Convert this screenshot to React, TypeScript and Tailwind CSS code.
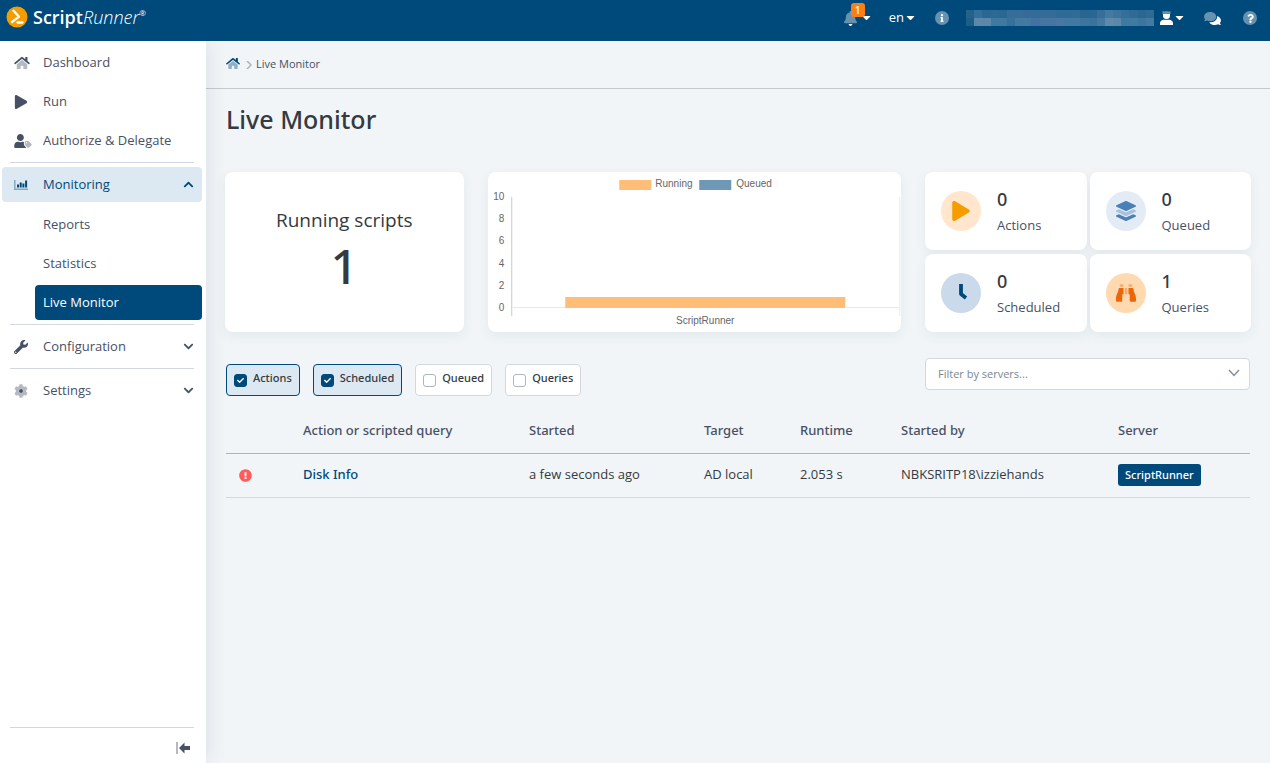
import { useState } from "react";
import type { ReactNode } from "react";
import {
  FaCaretDown,
  FaCheck,
  FaChevronDown,
  FaChevronUp,
  FaCog,
  FaExclamationCircle,
  FaInfo,
  FaPlay,
  FaQuestion,
  FaWrench,
} from "react-icons/fa";

const HomeIcon = ({ className }: { className: string }) => (
  <svg viewBox="0 0 576 512" fill="currentColor" className={className}>
    <path
      opacity=".4"
      d="M280.37 148.26L96 300.11V464a16 16 0 0 0 16 16l112.06-.29a16 16 0 0 0 15.92-16V368a16 16 0 0 1 16-16h64a16 16 0 0 1 16 16v95.64a16 16 0 0 0 16 16.05L464 480a16 16 0 0 0 16-16V300L295.67 148.26a12.19 12.19 0 0 0-15.3 0z"
    />
    <path d="M571.6 251.47L488 182.56V44.05a12 12 0 0 0-12-12h-56a12 12 0 0 0-12 12v72.61L318.47 43a48 48 0 0 0-61 0L4.34 251.47a12 12 0 0 0-1.6 16.9l25.5 31A12 12 0 0 0 45.15 301l235.22-193.74a12.19 12.19 0 0 1 15.3 0L530.9 301a12 12 0 0 0 16.9-1.6l25.5-31a12 12 0 0 0-1.7-16.93z" />
  </svg>
);

const UserTagIcon = () => (
  <svg viewBox="0 0 640 512" fill="currentColor" className="h-[14px] w-[18px]">
    <path
      opacity=".4"
      d="M630.6 364.9l-90.3-90.2c-12-12-28.3-18.7-45.3-18.7h-79.3c-17.7 0-32 14.3-32 32v79.2c0 17 6.7 33.2 18.7 45.2l90.3 90.2c12.5 12.5 32.8 12.5 45.3 0l92.5-92.5c12.6-12.5 12.6-32.7.1-45.2zm-182.8-21c-13.3 0-24-10.7-24-24s10.7-24 24-24 24 10.7 24 24c0 13.2-10.7 24-24 24z"
    />
    <path d="M224 255.9c70.7 0 128-57.3 128-128C352 57.3 294.7 0 224 0S96 57.3 96 128c0 70.6 57.3 127.9 128 127.9zm127.8 111.2V294c-12.2-3.6-24.9-6.2-38.2-6.2h-16.7c-22.2 10.2-46.9 16-72.9 16s-50.6-5.8-72.9-16h-16.7C60.2 287.9 0 348.1 0 422.3v41.6c0 26.5 21.5 48 48 48h352c15.5 0 29.1-7.5 37.9-18.9l-58-58c-18.1-18.1-28.1-42.2-28.1-67.9z" />
  </svg>
);

const ChartIcon = () => (
  <svg viewBox="0 0 14 12" fill="currentColor" className="h-3 w-[14px]">
    <path opacity=".4" d="M0 1h1.500v8.500H14V11H0z" />
    <path d="M3 5.500h2v3H3zM5.700 3.500h2v5h-2zM8.400 4.500h2v4h-2zM11.100 1.500h2v7h-2z" />
  </svg>
);

const CogIcon = () => (
  <svg viewBox="0 0 14 14" fill="currentColor" className="size-[14px]">
    <FaCog size={14} opacity=".4" />
    <circle cx="7" cy="7" r="2" />
  </svg>
);

const BellIcon = () => (
  <svg viewBox="0 0 448 512" fill="currentColor" className="h-[15px] w-[13px]">
    <path d="M224 512c35.32 0 63.97-28.65 63.97-64H160.03c0 35.35 28.65 64 63.97 64z" />
    <path
      opacity=".4"
      d="M439.39 362.29c-19.32-20.76-55.47-51.99-55.47-154.29 0-77.7-54.48-139.9-127.94-155.16V32c0-17.67-14.32-32-31.98-32s-31.98 14.33-31.98 32v20.84C118.56 68.1 64.08 130.3 64.08 208c0 102.3-36.15 133.53-55.47 154.29-6 6.45-8.66 14.16-8.61 21.71.11 16.4 12.98 32 32.1 32h383.8c19.12 0 32-15.6 32.1-32 .05-7.55-2.61-15.27-8.61-21.71z"
    />
  </svg>
);

const CommentsIcon = () => (
  <svg viewBox="0 0 576 512" fill="currentColor" className="h-[15px] w-[17px]">
    <path
      opacity=".4"
      d="M416 192c0-88.4-93.1-160-208-160S0 103.6 0 192c0 34.3 14.1 65.9 38 92-13.4 30.2-35.5 54.2-35.8 54.5-2.2 2.3-2.8 5.7-1.5 8.7S4.8 352 8 352c36.6 0 66.9-12.3 88.7-25 32.2 15.7 70.3 25 111.3 25 114.9 0 208-71.6 208-160z"
    />
    <path d="M538 412c23.9-26 38-57.7 38-92 0-66.9-53.5-124.2-129.3-148.1.9 6.6 1.3 13.3 1.3 20.1 0 105.9-107.7 192-240 192-10.8 0-21.3-.8-31.7-1.9C207.8 439.6 281.8 480 368 480c41 0 79.1-9.2 111.3-25 21.8 12.7 52.1 25 88.7 25 3.2 0 6.1-1.9 7.3-4.8 1.3-2.9.7-6.3-1.5-8.7-.3-.3-22.4-24.2-35.8-54.5z" />
  </svg>
);

const AccountIcon = () => (
  <svg viewBox="0 0 13 14" fill="currentColor" className="h-[14px] w-[13px]">
    <path opacity=".4" d="M2.500 0l1.700.6L6.500 0l2.300.6L10.500 0v3h-8z" />
    <path d="M3 3h7v1.500a3.500 3.500 0 0 1-7 0zM0 12.500C0 10.500 1.300 9 3.300 8.800h6.400c2 .2 3.300 1.700 3.300 3.700V14H0z" />
  </svg>
);

const LayersIcon = () => (
  <svg viewBox="0 0 512 512" fill="currentColor" className="size-5">
    <path d="M12.41 148.02l232.94 105.67c6.8 3.09 14.49 3.09 21.29 0l232.94-105.67c16.55-7.51 16.55-32.52 0-40.03L266.65 2.31a25.607 25.607 0 0 0-21.29 0L12.41 107.98c-16.55 7.51-16.55 32.53 0 40.04z" />
    <path
      opacity=".4"
      d="M499.59 236.31l-58.09-26.33-161.64 73.27c-7.56 3.43-15.59 5.17-23.86 5.17s-16.29-1.74-23.86-5.17L70.51 209.98l-58.1 26.33c-16.55 7.5-16.55 32.5 0 40l232.94 105.59c6.8 3.08 14.49 3.08 21.29 0L499.59 276.3c16.55-7.5 16.55-32.5 0-40z"
    />
    <path d="M499.59 364.28l-57.87-26.21-161.86 73.37c-7.56 3.43-15.59 5.17-23.86 5.17s-16.29-1.74-23.86-5.17L70.29 338.07 12.41 364.28c-16.55 7.5-16.55 32.5 0 40l232.94 105.59c6.8 3.08 14.49 3.08 21.29 0L499.59 404.28c16.55-7.5 16.55-32.5 0-40z" />
  </svg>
);

const BinocularsIcon = () => (
  <svg viewBox="0 0 512 512" fill="currentColor" className="size-5">
    <path
      opacity=".4"
      d="M416 48c0-8.84-7.16-16-16-16h-64c-8.84 0-16 7.16-16 16v48h96V48zM176 32h-64c-8.84 0-16 7.16-16 16v48h96V48c0-8.84-7.16-16-16-16zm48 256h64V128h-64v160z"
    />
    <path d="M63.91 159.99C61.4 253.84 3.46 274.22 0 404v44c0 17.67 14.33 32 32 32h96c17.67 0 32-14.33 32-32V288h32V128H95.84c-17.63 0-31.45 14.37-31.93 31.99zm384.18 0c-.48-17.62-14.3-31.99-31.93-31.99H320v160h32v160c0 17.67 14.33 32 32 32h96c17.67 0 32-14.33 32-32v-44c-3.46-129.78-61.4-150.16-63.91-244.01z" />
  </svg>
);

const ClockHandsIcon = () => (
  <svg viewBox="0 0 20 20" fill="none" stroke="currentColor" className="size-5">
    <path d="M10 1v10l5 4" strokeWidth="3.800" strokeLinejoin="round" />
  </svg>
);

const LogoIcon = () => (
  <svg viewBox="0 0 22 22" className="size-[22px]">
    <circle cx="11" cy="11" r="10.5" fill="#f59c00" />
    <path
      d="M7.500 4.800l5.500 5.900L6 16M11.500 16.500h5"
      fill="none"
      stroke="#fff"
      strokeWidth="2.300"
      strokeLinecap="round"
      strokeLinejoin="round"
    />
  </svg>
);

const maskTop = ["#24628c", "#32709a", "#2a6893", "#2c6a95", "#2a6893", "#376d99", "#376d99", "#376a98", "#336d97", "#336d97", "#336d97", "#2e6b95", "#2e6b95", "#316c96", "#28658f", "#2a6691", "#376f98", "#447aa0", "#3d749c", "#32709a", "#2f6b95", "#2b6791", "#2e6b94"];
const maskBottom = ["#1d5d89", "#5e88a9", "#5c87a8", "#4079a0", "#4079a0", "#36719b", "#447aa1", "#447aa1", "#4172a0", "#4874a2", "#4874a2", "#4b78a3", "#4379a1", "#4379a1", "#3c759e", "#39739b", "#447aa1", "#6089aa", "#5c87a8", "#4079a0", "#407aa0", "#3c759e", "#447aa1"];

const Header = () => (
  <header className="relative z-20 flex h-[41px] items-center justify-between bg-[#00497b] pr-[13px] pl-[6px] text-white">
    <a href="#" className="flex h-[34px] items-center gap-[5px] self-start">
      <LogoIcon />
      <span className="flex text-[18px] leading-[22px]">
        <span className="font-semibold">Script</span>
        <span className="font-light italic">Runner</span>
        <sup className="top-0 text-[8px] leading-[14px]">®</sup>
      </span>
    </a>

    <div className="flex h-9 items-center self-start text-[13px]">
      <button className="relative mr-4 flex items-center gap-[3px]">
        <BellIcon />
        <FaCaretDown size={13} className="mb-[2px]" />
        <span className="absolute -top-2 left-[7px] size-[14px] rounded-[3px] bg-[#fd7e14] text-center text-[10px] leading-[14px] font-semibold">
          1
        </span>
      </button>
      <button className="mr-[18px] flex items-center">
        en
        <FaCaretDown size={13} className="mb-[2px]" />
      </button>
      <button
        aria-label="Info"
        className="mr-[17px] grid size-[14px] place-items-center rounded-full bg-white/40"
      >
        <FaInfo size={8} />
      </button>
      <div className="mr-[6px] w-[188px]">
        <div className="flex h-2">
          {maskTop.map((color, i) => (
            <span key={i} className="flex-1" style={{ backgroundColor: color }} />
          ))}
        </div>
        <div className="flex h-2">
          {maskBottom.map((color, i) => (
            <span key={i} className="flex-1" style={{ backgroundColor: color }} />
          ))}
        </div>
      </div>
      <button aria-label="Account" className="mr-[18px] flex items-center">
        <AccountIcon />
        <FaCaretDown size={13} className="mb-[2px]" />
      </button>
      <button aria-label="Messages" className="mr-[22px]">
        <CommentsIcon />
      </button>
      <button
        aria-label="Help"
        className="grid size-[14px] place-items-center rounded-full bg-white/40"
      >
        <FaQuestion size={9} />
      </button>
    </div>
  </header>
);

const NavItem = ({
  icon,
  label,
  chevron,
  open,
}: {
  icon: ReactNode;
  label: string;
  chevron?: ReactNode;
  open?: boolean;
}) => (
  <a
    href="#"
    className={`flex h-[35px] items-center rounded pr-2 pl-3 ${
      open ? "bg-[#dce8f2] text-[#00497b]" : "text-[#475166]"
    }`}
  >
    <span className="w-[29px]">{icon}</span>
    <span className="flex-1">{label}</span>
    {chevron}
  </a>
);

const Divider = () => <hr className="mr-2 ml-2 border-[#d3d8e0]" />;

const Sidebar = () => (
  <aside className="z-10 flex w-[206px] shrink-0 flex-col justify-between bg-white text-[13px] shadow-[0_0_20px_rgba(40,60,80,0.12)]">
    <nav className="flex flex-col gap-1 pt-1 pr-1 pl-[2px]">
      <NavItem icon={<HomeIcon className="h-[14px] w-4" />} label="Dashboard" />
      <NavItem icon={<FaPlay size={14} />} label="Run" />
      <NavItem icon={<UserTagIcon />} label="Authorize & Delegate" />
      <Divider />
      <NavItem
        icon={<ChartIcon />}
        label="Monitoring"
        chevron={<FaChevronUp size={11} />}
        open
      />
      <div className="flex flex-col gap-1 pt-px pl-[33px] text-[#475166]">
        <a href="#" className="flex h-[35px] items-center rounded px-2">
          Reports
        </a>
        <a href="#" className="flex h-[35px] items-center rounded px-2">
          Statistics
        </a>
        <a
          href="#"
          className="flex h-[35px] items-center rounded bg-[#00497b] px-2 text-white"
        >
          Live Monitor
        </a>
      </div>
      <Divider />
      <NavItem
        icon={<FaWrench size={14} />}
        label="Configuration"
        chevron={<FaChevronDown size={11} />}
      />
      <Divider />
      <NavItem
        icon={<CogIcon />}
        label="Settings"
        chevron={<FaChevronDown size={11} />}
      />
    </nav>

    <div className="pr-1 pl-[2px]">
      <Divider />
      <div className="flex h-[35px] items-center justify-end pt-1 pr-3">
        <button aria-label="Collapse menu" className="text-[#475166]">
          <svg viewBox="0 0 14 12" fill="currentColor" className="h-3 w-[14px]">
            <path opacity=".4" d="M0 0h2v12H0z" />
            <path d="M3 6l5.500-5.500V4H14v4H8.500v3.500z" />
          </svg>
        </button>
      </div>
    </div>
  </aside>
);

const Card = ({ className, children }: { className: string; children: ReactNode }) => (
  <div className={`rounded-lg bg-white shadow-[0_4px_12px_rgba(40,70,90,0.07)] ${className}`}>
    {children}
  </div>
);

const QueueChart = () => (
  <svg
    viewBox="0 0 413 160"
    className="h-40 w-full font-['Liberation_Sans',Arial,sans-serif] text-[10px]"
  >
    <rect x="131" y="8" width="32" height="10" fill="#ffbd78" />
    <rect x="211" y="8" width="32" height="10" fill="#6f98b7" />
    <g fill="#666">
      <text x="167" y="15">Running</text>
      <text x="248" y="15">Queued</text>
      {[10, 8, 6, 4, 2, 0].map((tick, i) => (
        <text key={tick} x="16" y={28 + i * 22.2} textAnchor="end">
          {tick}
        </text>
      ))}
      <text x="217" y="152" textAnchor="middle">ScriptRunner</text>
    </g>
    <path d="M23.500 25v119" stroke="#c9c9c9" />
    <path d="M411.500 25v119M24 135.500h387" stroke="#e8e8e8" />
    <rect x="77" y="125" width="280" height="11" fill="#ffbd78" />
  </svg>
);

const stats = [
  { label: "Actions", value: 0, color: "bg-[#ffe6cc] text-[#f59c00]", icon: <FaPlay size={20} /> },
  { label: "Queued", value: 0, color: "bg-[#e3ecf5] text-[#4a7fb8]", icon: <LayersIcon /> },
  { label: "Scheduled", value: 0, color: "bg-[#cadaea] text-[#00497b]", icon: <ClockHandsIcon /> },
  { label: "Queries", value: 1, color: "bg-[#ffdab0] text-[#ec6608]", icon: <BinocularsIcon /> },
];

const FilterToggle = ({ label, initial }: { label: string; initial: boolean }) => {
  const [checked, setChecked] = useState(initial);

  return (
    <label
      className={`flex h-8 cursor-pointer items-center gap-[6px] rounded border px-[7px] font-['Noto_Sans',sans-serif] text-[11px] font-medium text-[#343a40] ${
        checked ? "border-[#00497b] bg-[#dce8f2]" : "border-[#d3d8e0] bg-white"
      }`}
    >
      <span className="relative size-[13px]">
        <input
          type="checkbox"
          checked={checked}
          onChange={(e) => setChecked(e.target.checked)}
          className="block size-[13px] appearance-none rounded-[3px] border border-[#adb5bd] bg-white checked:border-[#00497b] checked:bg-[#00497b]"
        />
        {checked && (
          <FaCheck
            size={7}
            className="pointer-events-none absolute top-[3px] left-[3px] text-white"
          />
        )}
      </span>
      <span className="pb-1">{label}</span>
    </label>
  );
};

const columns = [
  { label: "", width: "w-[77px]" },
  { label: "Action or scripted query", width: "w-[226px]" },
  { label: "Started", width: "w-[175px]" },
  { label: "Target", width: "w-[96px]" },
  { label: "Runtime", width: "w-[101px]" },
  { label: "Started by", width: "w-[217px]" },
  { label: "Server", width: "w-[132px]" },
];

const RunsTable = () => (
  <table className="mt-3 w-full table-fixed text-left text-[13px] text-[#343a40]">
    <thead>
      <tr className="h-[45px] border-b border-[#adb5c4] font-['Noto_Sans',sans-serif] text-[#475166]">
        {columns.map((col) => (
          <th key={col.label} className={`font-medium ${col.width}`}>
            {col.label}
          </th>
        ))}
      </tr>
    </thead>
    <tbody>
      <tr className="h-11 border-b border-[#d3d8e0]">
        <td className="pl-[13px]">
          <FaExclamationCircle size={13} className="text-[#ff5c5c]" />
        </td>
        <td>
          <a href="#" className="font-['Noto_Sans',sans-serif] font-medium text-[#00497b]">
            Disk Info
          </a>
        </td>
        <td>a few seconds ago</td>
        <td>AD local</td>
        <td>2.053 s</td>
        <td>NBKSRITP18\izziehands</td>
        <td>
          <span className="inline-block rounded-[3px] bg-[#00497b] px-[7px] font-['Noto_Sans',sans-serif] text-[11px] leading-[22px] font-medium text-white">
            ScriptRunner
          </span>
        </td>
      </tr>
    </tbody>
  </table>
);

const App = () => {
  return (
    <div className="flex min-h-screen flex-col bg-[#f1f5f8] font-['Open_Sans','Noto_Sans',sans-serif]">
      <Header />
      <div className="flex flex-1">
        <Sidebar />
        <main className="min-w-0 flex-1">
          <div className="flex h-12 items-center border-b border-[#c6c9cc] px-5 text-[11px] text-[#475166]">
            <a href="#" aria-label="Home" className="pb-[2px] text-[#00497b]">
              <HomeIcon className="h-[13px] w-[14px]" />
            </a>
            <svg viewBox="0 0 6 8" className="mr-1 ml-[6px] h-2 w-[6px]">
              <path d="M1 0l4 4-4 4" fill="none" stroke="#adb5bd" strokeWidth="1.500" />
            </svg>
            <span>Live Monitor</span>
          </div>

          <h1 className="px-5 pt-3 font-['Noto_Sans',sans-serif] text-[25px] leading-9 font-medium text-[#343a40]">
            Live Monitor
          </h1>

          <div className="mt-[35px] grid grid-cols-12 gap-6 px-[19px]">
            <Card className="col-span-3 flex flex-col items-center justify-center text-[#343a40]">
              <p className="text-[19px] leading-6">Running scripts</p>
              <p className="mt-1 font-['Noto_Sans',sans-serif] text-5xl leading-[60px] font-medium">
                1
              </p>
            </Card>
            <Card className="col-span-5">
              <QueueChart />
            </Card>
            <div className="col-span-4 grid grid-cols-2 gap-x-[3px] gap-y-1">
              {stats.map((stat) => (
                <Card key={stat.label} className="flex h-[78px] items-center gap-4 pl-4">
                  <span className={`grid size-10 place-items-center rounded-full ${stat.color}`}>
                    {stat.icon}
                  </span>
                  <div>
                    <p className="font-['Noto_Sans',sans-serif] text-lg leading-6 font-medium text-[#343a40]">
                      {stat.value}
                    </p>
                    <p className="pt-1 text-[13px] leading-5 text-[#475166]">{stat.label}</p>
                  </div>
                </Card>
              ))}
            </div>
          </div>

          <div className="px-5 pt-[26px]">
            <div className="flex justify-between">
              <div className="flex gap-[13px] pt-[6px]">
                <FilterToggle label="Actions" initial />
                <FilterToggle label="Scheduled" initial />
                <FilterToggle label="Queued" initial={false} />
                <FilterToggle label="Queries" initial={false} />
              </div>
              <div className="relative h-8 w-[325px]">
                <select
                  aria-label="Filter by servers"
                  defaultValue=""
                  className="h-8 w-full appearance-none rounded border border-[#d3d8e0] bg-white px-3 text-[11px] text-[#7b8794]"
                >
                  <option value="">Filter by servers...</option>
                  <option>ScriptRunner</option>
                </select>
                <svg
                  viewBox="0 0 12 8"
                  className="pointer-events-none absolute top-[11px] right-[10px] h-2 w-3"
                >
                  <path d="M1 1l5 5.500L11 1" fill="none" stroke="#8090a0" strokeWidth="1.500" />
                </svg>
              </div>
            </div>
            <RunsTable />
          </div>
        </main>
      </div>
    </div>
  );
};

export default App;
